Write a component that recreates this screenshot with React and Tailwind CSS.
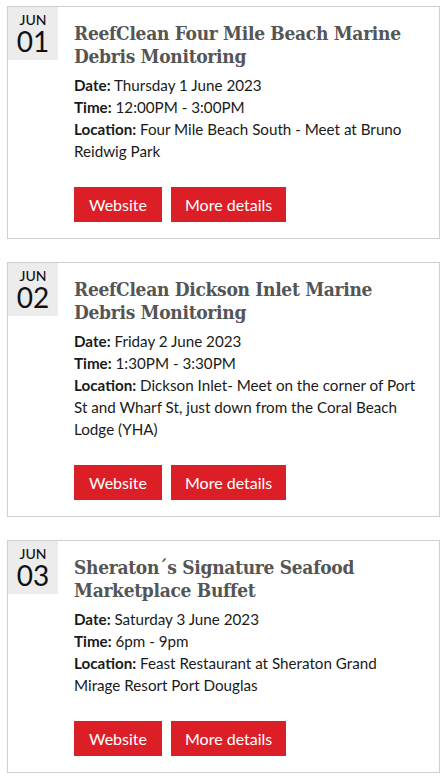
import React from "react";

const events = [
  {
    day: "01",
    title: "ReefClean Four Mile Beach Marine Debris Monitoring",
    date: "Thursday 1 June 2023",
    time: "12:00PM - 3:00PM",
    location: "Four Mile Beach South - Meet at Bruno Reidwig Park",
  },
  {
    day: "02",
    title: "ReefClean Dickson Inlet Marine Debris Monitoring",
    date: "Friday 2 June 2023",
    time: "1:30PM - 3:30PM",
    location:
      "Dickson Inlet- Meet on the corner of Port St and Wharf St, just down from the Coral Beach Lodge (YHA)",
  },
  {
    day: "03",
    title: "Sheraton\u00b4s Signature Seafood Marketplace Buffet",
    date: "Saturday 3 June 2023",
    time: "6pm - 9pm",
    location: "Feast Restaurant at Sheraton Grand Mirage Resort Port Douglas",
  },
];

function Card({ e }) {
  return (
    <div className="flex border border-[#cfcfcf] bg-white">
      <div className="w-[50px] h-[53px] shrink-0 bg-[#ececec] flex flex-col items-center pt-[5px] text-[#111]">
        <span className="text-[14px] leading-[15px] font-medium">JUN</span>
        <span className="text-[28px] leading-[28px]">{e.day}</span>
      </div>
      <div className="flex-1 pl-[16px] pr-[20px] pt-[15px] pb-[16px]">
        <h2 className="font-['DejaVu_Serif_Condensed','DejaVu_Serif',serif] font-bold text-[19px] leading-[23px] text-[#555] tracking-[-0.3px]">
          {e.title}
        </h2>
        <div className="mt-[6px] text-[15.2px] leading-[22px] text-[#1a1a1a]">
          <p>
            <b className="font-bold">Date:</b> {e.date}
          </p>
          <p>
            <b className="font-bold">Time:</b> {e.time}
          </p>
          <p>
            <b className="font-bold">Location:</b> {e.location}
          </p>
        </div>
        <div className="flex gap-[9px] mt-[25px]">
          <span className="bg-[#dc1f27] text-white text-[16px] h-[35px] flex items-center px-[15px]">
            Website
          </span>
          <span className="bg-[#dc1f27] text-white text-[16px] h-[35px] flex items-center px-[14px]">
            More details
          </span>
        </div>
      </div>
    </div>
  );
}

export default function App() {
  return (
    <div className="bg-white w-[447px] min-h-[782px] px-[7px] pt-[6px] flex flex-col gap-[23px] font-['Lato',sans-serif]">
      {events.map((e) => (
        <Card key={e.day} e={e} />
      ))}
    </div>
  );
}
